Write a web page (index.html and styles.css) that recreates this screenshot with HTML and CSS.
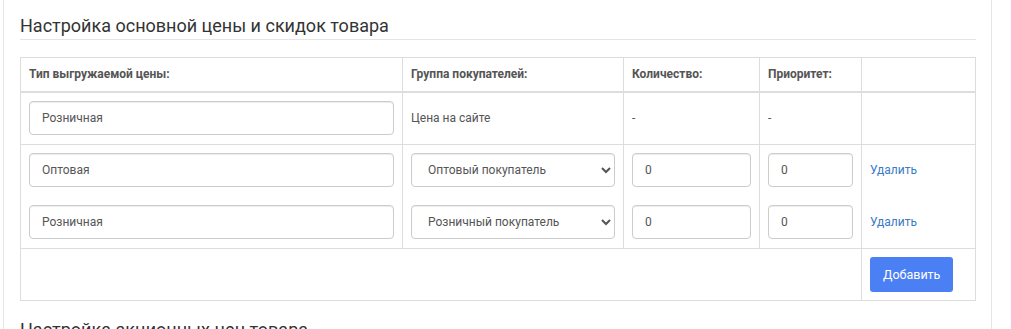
FILE: index.html
```html
<!DOCTYPE html>
<html lang="ru">
<head>
<meta charset="utf-8">
<title>Настройка цен</title>
<link rel="stylesheet" href="styles.css">
</head>
<body>
<div class="page">
  <section class="block">
    <h2 class="block-title">Настройка основной цены и скидок товара</h2>
    <table class="price-table">
      <colgroup>
        <col class="c1"><col class="c2"><col class="c3"><col class="c4"><col class="c5">
      </colgroup>
      <thead>
        <tr>
          <th>Тип выгружаемой цены:</th>
          <th>Группа покупателей:</th>
          <th>Количество:</th>
          <th>Приоритет:</th>
          <th></th>
        </tr>
      </thead>
      <tbody>
        <tr class="row-tall">
          <td><input class="field" type="text" value="Розничная"></td>
          <td class="text">Цена на сайте</td>
          <td class="text">-</td>
          <td class="text">-</td>
          <td></td>
        </tr>
        <tr class="row-tall">
          <td>
            <div class="stack">
              <input class="field" type="text" value="Оптовая">
              <input class="field" type="text" value="Розничная">
            </div>
          </td>
          <td>
            <div class="stack">
              <select class="field select"><option>Оптовый покупатель</option></select>
              <select class="field select"><option>Розничный покупатель</option></select>
            </div>
          </td>
          <td>
            <div class="stack">
              <input class="field" type="text" value="0">
              <input class="field" type="text" value="0">
            </div>
          </td>
          <td>
            <div class="stack">
              <input class="field" type="text" value="0">
              <input class="field" type="text" value="0">
            </div>
          </td>
          <td>
            <div class="stack">
              <a class="link" href="#">Удалить</a>
              <a class="link" href="#">Удалить</a>
            </div>
          </td>
        </tr>
        <tr>
          <td colspan="4"></td>
          <td><button class="btn" type="button">Добавить</button></td>
        </tr>
      </tbody>
    </table>
  </section>
  <h2 class="block-title second">Настройка акционных цен товара</h2>
</div>
</body>
</html>
```

FILE: styles.css
```css
html, body {
  margin: 0;
  padding: 0;
  background: #fff;
}

body {
  font-family: Roboto, "Liberation Sans", Arial, sans-serif;
  color: #333;
}

.page {
  box-sizing: border-box;
  margin-left: 3px;
  width: 989px;
  min-height: 100vh;
  border-left: 1px solid #e6e6e6;
  border-right: 1px solid #e6e6e6;
  padding: 16px 15px 0 16px;
}

.block-title {
  margin: 0;
  font-size: 18px;
  font-weight: 400;
  line-height: 20px;
  color: #333;
  padding-bottom: 3px;
  border-bottom: 1px solid #e5e5e5;
}

.block-title.second {
  margin-top: 19px;
}

.price-table {
  margin-top: 17px;
  width: 956px;
  border-collapse: collapse;
  table-layout: fixed;
  border: 1px solid #ddd;
}

.c1 { width: 382px; }
.c2 { width: 221px; }
.c3 { width: 136px; }
.c4 { width: 102px; }

.price-table th,
.price-table td {
  border: 1px solid #ddd;
  padding: 8px;
  font-size: 12px;
  line-height: 17px;
  text-align: left;
  vertical-align: top;
}

.price-table thead th {
  border-bottom-width: 2px;
  font-weight: 700;
  color: #555;
}

.price-table .row-tall td {
  padding-bottom: 9px;
}

.price-table td.text {
  vertical-align: middle;
  color: #555;
}

.stack {
  display: flex;
  flex-direction: column;
  gap: 18px;
}

.field {
  display: block;
  box-sizing: border-box;
  width: 100%;
  height: 34px;
  margin: 0;
  padding: 6px 12px;
  border: 1px solid #ccc;
  border-radius: 4px;
  background: #fff;
  font-family: Roboto, "Liberation Sans", Arial, sans-serif;
  font-size: 12px;
  color: #555;
  box-shadow: inset 0 1px 1px rgba(0, 0, 0, 0.075);
}

.select {
  padding: 6px 8px 6px 12px;
}

.link {
  display: block;
  line-height: 34px;
  height: 34px;
  color: #3b7bc4;
  text-decoration: none;
  font-size: 12px;
}

.btn {
  display: block;
  height: 35px;
  padding: 0 13px;
  border: none;
  border-radius: 3px;
  background: #4b80f5;
  color: #fff;
  font-family: Roboto, "Liberation Sans", Arial, sans-serif;
  font-size: 12.5px;
  cursor: pointer;
}
```
